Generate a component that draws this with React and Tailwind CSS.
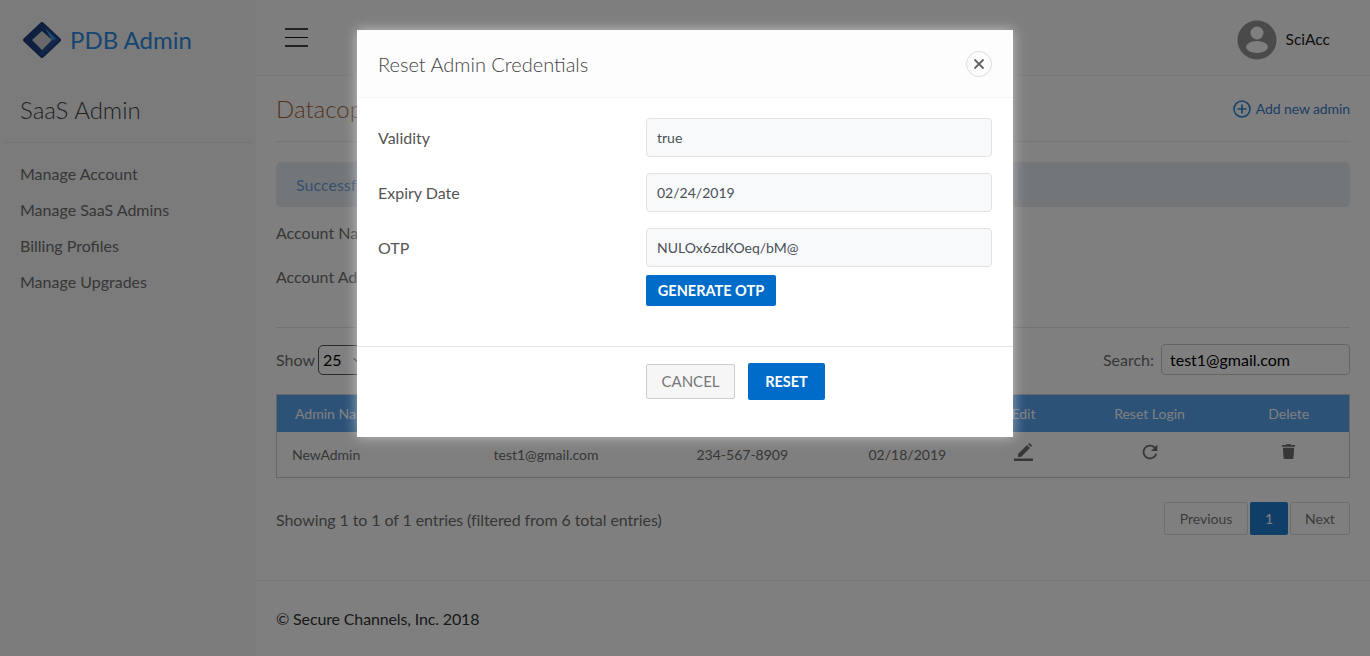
import React from "react";
import { FaTrash } from "react-icons/fa";
import { MdRefresh } from "react-icons/md";
import { X, ChevronDown } from "lucide-react";

const sideLinks = [
  "Manage Account",
  "Manage SaaS Admins",
  "Billing Profiles",
  "Manage Upgrades",
];

function Logo() {
  return (
    <svg width="38" height="36" viewBox="0 0 38 36">
      <path d="M19 2 L36 18 L19 34 L2 18 Z" fill="#1d3f80" stroke="#1d3f80" strokeWidth="4" strokeLinejoin="round" />
      <path d="M21 4 L36 18 L19 34 L16 30 L28 18 Z" fill="#244f95" />
      <path d="M22 6 L33 17 L29 18 Z" fill="#3f9ad6" />
      <path d="M19 9 L29 18 L19 28 L9 18 Z" fill="#d2d2d2" />
    </svg>
  );
}

function Avatar() {
  return (
    <svg width="40" height="40" viewBox="0 0 40 40">
      <circle cx="20" cy="20" r="19.5" fill="#949494" />
      <circle cx="20" cy="13" r="6.5" fill="#fff" />
      <ellipse cx="20" cy="27" rx="11" ry="6" fill="#fff" />
    </svg>
  );
}

function EditIcon() {
  return (
    <svg width="20" height="18" viewBox="0 0 20 18" className="mx-auto mb-[4px]">
      <path d="M4 11 L13 2 L16 5 L7 14 L4 14 Z" fill="#6f6f6f" />
      <path d="M14 1 L15.5 0 L18 2.5 L17 4 Z" fill="#6f6f6f" />
      <rect x="0" y="15.5" width="19" height="2.5" fill="#6f6f6f" />
    </svg>
  );
}

function PlusCircle() {
  return (
    <svg width="18" height="18" viewBox="0 0 18 18" fill="none" stroke="#2d86d8" strokeWidth="1.6">
      <circle cx="9" cy="9" r="8" />
      <path d="M9 4.5 V13.5 M4.5 9 H13.5" />
    </svg>
  );
}

function FormRow({ label, value, children }) {
  return (
    <div className="flex mb-4">
      <label className="w-[268px] pt-[8px] text-[16px] leading-[24px] text-[#555]">{label}</label>
      <div className="w-[346px]">
        <input
          readOnly
          value={value}
          className="w-full h-[39px] px-[10px] text-[14px] text-[#495057] bg-[#f8f9fb] border border-[#e2e2e2] rounded-[4px] outline-none"
        />
        {children}
      </div>
    </div>
  );
}

export default function App() {
  return (
    <div className="relative h-[656px] overflow-hidden bg-white font-['Lato','Liberation_Sans',sans-serif] text-[#444]">
      <div className="flex h-full">
        <aside className="w-[256px] shrink-0 bg-[#f6f6f6]">
          <div className="h-[76px] flex items-center gap-[9px] pl-[23px] pt-[3px]">
            <Logo />
            <span className="text-[24px] text-[#2b8be0]">PDB Admin</span>
          </div>
          <h2 className="h-[67px] mx-[4px] pl-[16px] pt-[17px] text-[24px] leading-[34px] font-light text-[#444] border-b border-[#e8e8e8]">
            SaaS Admin
          </h2>
          <ul className="mt-[13px] pl-[20px]">
            {sideLinks.map((link) => (
              <li key={link} className="h-[36px] flex items-center text-[16px] text-[#6e6e6e]">
                {link}
              </li>
            ))}
          </ul>
        </aside>

        <div className="flex-1 flex flex-col">
          <header className="h-[76px] flex items-center justify-between bg-[#fcfcfc] border-b border-[#f2f2f2] pl-[29px] pr-[40px]">
            <div className="w-[23px] flex flex-col gap-[7px] mt-[1px] mb-[1px]">
              <span className="h-[2px] bg-[#444]" />
              <span className="h-[1px] bg-[#111]" />
              <span className="h-[2px] bg-[#444]" />
            </div>
            <div className="flex items-center gap-[9px] pt-[4px]">
              <Avatar />
              <span className="text-[15.5px] text-[#222]">SciAcc</span>
            </div>
          </header>

          <main className="flex-1 px-[20px]">
            <div className="h-[66px] flex items-center justify-between border-b border-[#eaeaea]">
              <h1 className="text-[24px] font-light text-[#a5673f]">Datacopia</h1>
              <a className="flex items-center gap-[5px] text-[14px] tracking-[-0.1px] text-[#3b7dc9]">
                <PlusCircle />
                Add new admin
              </a>
            </div>

            <div className="mt-[20px] h-[45px] flex items-center pl-[20px] rounded-[5px] bg-[#e6edf3] text-[16px] text-[#6f9fd8]">
              Successfully updated
            </div>

            <div className="mt-[14px] h-[24px] text-[16px] leading-[24px] text-[#6e6e6e]">Account Name</div>
            <div className="mt-[20px] h-[24px] text-[16px] leading-[24px] text-[#6e6e6e]">Account Admin</div>

            <div className="mt-[38px] pt-[16px] border-t border-[#e3e3e3] flex items-center justify-between">
              <div className="flex items-center gap-[3px] text-[16px] text-[#6e6e6e]">
                Show
                <div className="w-[76px] h-[30px] flex items-center justify-between pl-[4px] pr-[30px] border border-[#555] rounded-[5px] text-black">
                  25
                  <ChevronDown size={12} />
                </div>
              </div>
              <div className="flex items-center gap-[7px] text-[16px] text-[#6e6e6e]">
                Search:
                <input
                  readOnly
                  value="test1@gmail.com"
                  className="w-[189px] h-[31px] px-[8px] text-[16px] text-black border border-[#ccc] rounded-[4px] outline-none"
                />
              </div>
            </div>

            <table className="mt-[19px] w-full table-fixed border border-[#cfcfcf] text-[14px]">
              <thead>
                <tr className="h-[37px] bg-[#5aa4f0] text-white">
                  <th className="w-[202px] pl-[18px] text-left font-normal">Admin Name</th>
                  <th className="w-[203px] pl-[15px] text-left font-normal">Email</th>
                  <th className="w-[172px] pl-[15px] text-left font-normal">Phone</th>
                  <th className="w-[130px] pl-[15px] text-left font-normal">Created</th>
                  <th className="w-[80px] text-center font-normal">Edit</th>
                  <th className="w-[172px] text-center font-normal">Reset Login</th>
                  <th className="pr-[7px] text-center font-normal">Delete</th>
                </tr>
              </thead>
              <tbody>
                <tr className="h-[46px] text-[#6e6e6e]">
                  <td className="pl-[15px]">NewAdmin</td>
                  <td className="pl-[15px]">test1@gmail.com</td>
                  <td className="pl-[15px]">234-567-8909</td>
                  <td className="pl-[15px]">02/18/2019</td>
                  <td><EditIcon /></td>
                  <td><MdRefresh className="mx-auto mb-[5px] text-[#6f6f6f] text-[22px]" /></td>
                  <td className="pr-[7px]"><FaTrash className="mx-auto mb-[5px] text-[#6f6f6f] text-[15px]" /></td>
                </tr>
              </tbody>
            </table>

            <div className="mt-[24px] flex items-center justify-between">
              <span className="pt-[2px] text-[16px] tracking-[-0.09px] text-[#6e6e6e]">Showing 1 to 1 of 1 entries (filtered from 6 total entries)</span>
              <div className="flex gap-[2px] text-[14px] text-[#777]">
                <span className="w-[84px] h-[33px] flex items-center justify-center border border-[#ddd] rounded-[2px]">Previous</span>
                <span className="w-[38px] h-[33px] flex items-center justify-center bg-[#1f7fd0] text-white rounded-[2px]">1</span>
                <span className="w-[60px] h-[33px] flex items-center justify-center border border-[#ddd] rounded-[2px]">Next</span>
              </div>
            </div>

            <footer className="mt-[45px] pt-[26px] border-t border-[#eee] -mx-[20px] px-[20px] text-[16px] tracking-[-0.14px] text-[#333]">
              © Secure Channels, Inc. 2018
            </footer>
          </main>
        </div>
      </div>

      <div className="absolute inset-0 bg-black/50 flex justify-center items-start">
        <div className="mt-[30px] w-[656px] h-[407px] bg-white shadow-[0_0_12px_rgba(255,255,255,0.55)] flex flex-col">
          <div className="h-[68px] flex items-center justify-between bg-[#fdfdfd] border-b border-[#f5f5f5] pl-[21px] pr-[21px]">
            <h3 className="text-[20px] font-light text-[#444]">Reset Admin Credentials</h3>
            <button className="w-[26px] h-[26px] flex items-center justify-center rounded-full border border-[#ddd] text-[#666]">
              <X size={16} strokeWidth={2.75} />
            </button>
          </div>
          <div className="h-[249px] pt-[20px] pl-[21px] border-b border-[#e4e4e4]">
            <FormRow label="Validity" value="true" />
            <FormRow label="Expiry Date" value="02/24/2019" />
            <FormRow label="OTP" value="NULOx6zdKOeq/bM@">
              <button className="mt-[8px] w-[130px] h-[31px] rounded-[2px] bg-[#006cc9] text-[14.5px] font-bold text-white">
                GENERATE OTP
              </button>
            </FormRow>
          </div>
          <div className="flex items-center gap-[13px] pl-[289px] pt-[16px]">
            <button className="w-[89px] h-[35px] rounded-[2px] border border-[#ccc] bg-[#f6f6f6] text-[15px] text-[#777]">
              CANCEL
            </button>
            <button className="w-[77px] h-[37px] rounded-[2px] bg-[#006cc9] text-[14.5px] font-bold text-white">
              RESET
            </button>
          </div>
        </div>
      </div>
    </div>
  );
}
